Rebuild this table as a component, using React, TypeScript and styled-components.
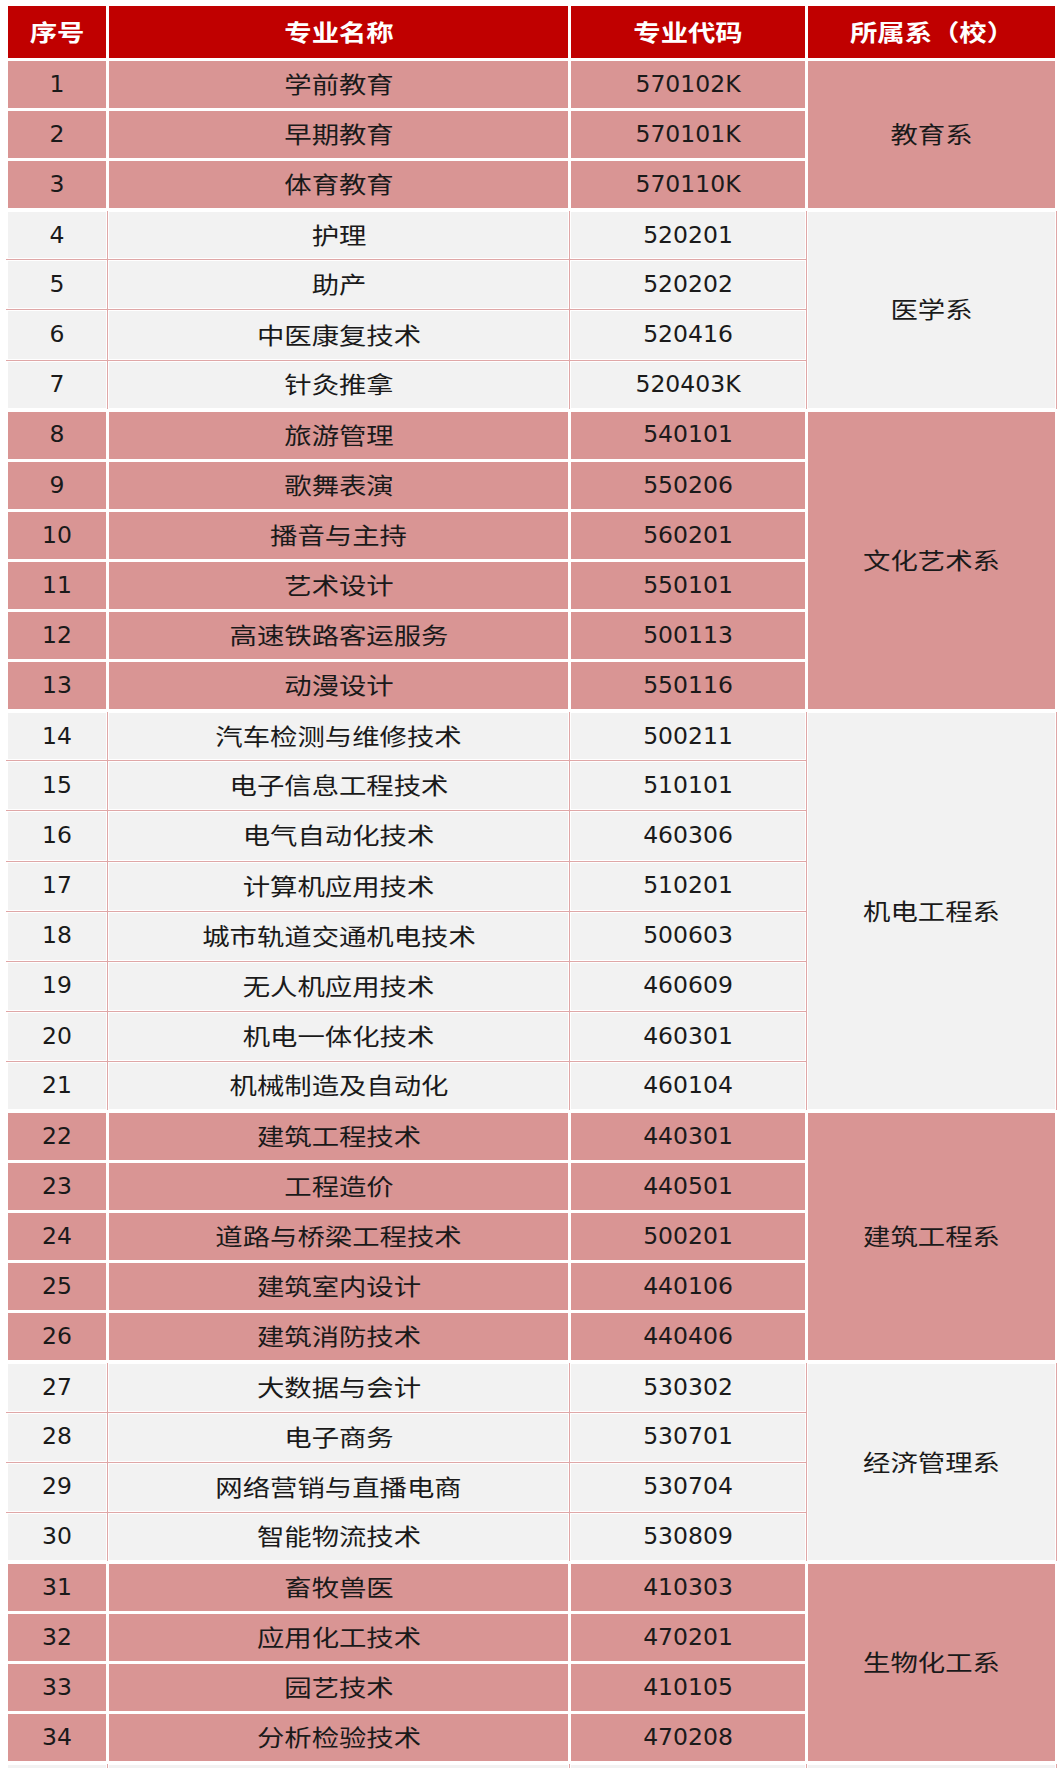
import React from 'react'
import styled, { createGlobalStyle, css } from 'styled-components'

type Tone = 'pink' | 'light'

const colors = {
  head: '#c00000',
  pink: '#d99594',
  light: '#f2f2f2',
  line: '#dfa7a7',
  text: '#1a1a1a',
}

const GlobalStyle = createGlobalStyle`
  html, body {
    margin: 0;
    background: #fff;
  }
`

const Page = styled.main`
  padding: 3px 4px 0 5px;
`

const Table = styled.table`
  width: 1050px;
  table-layout: fixed;
  border-collapse: collapse;
  color: ${colors.text};
`

const HeadRow = styled.tr`
  height: 55px;
`

const HeadCell = styled.th`
  background: ${colors.head};
  color: #fff;
  border: 3px solid #fff;
  padding: 0;
  text-align: center;
  vertical-align: middle;
`

const Row = styled.tr`
  height: 50.1px;
`

const toneStyle = {
  pink: css`
    background: ${colors.pink};
    border: 3px solid #fff;
  `,
  light: css`
    background: ${colors.light};
    border: 1px solid ${colors.line};
    box-shadow: inset 0 0 0 1px #fff;
  `,
}

const Cell = styled.td<{ $tone: Tone }>`
  ${p => toneStyle[p.$tone]};
  padding: 0;
  text-align: center;
  vertical-align: middle;

  &:first-child {
    border-left-color: #fff;
  }
`

const Cjk = styled.span<{ $bold?: boolean }>`
  display: inline-block;
  font-family: 'Noto Sans CJK SC', sans-serif;
  font-size: 23px;
  line-height: 1;
  font-weight: ${p => (p.$bold ? 700 : 400)};
  transform: scaleX(1.19);
`

const Num = styled.span`
  font-family: 'DejaVu Sans', Verdana, sans-serif;
  font-size: 23.5px;
  line-height: 1;
`

type Group = {
  dept: string
  tone: Tone
  items: [string, string][]
}

const groups: Group[] = [
  {
    dept: '教育系',
    tone: 'pink',
    items: [
      ['学前教育', '570102K'],
      ['早期教育', '570101K'],
      ['体育教育', '570110K'],
    ],
  },
  {
    dept: '医学系',
    tone: 'light',
    items: [
      ['护理', '520201'],
      ['助产', '520202'],
      ['中医康复技术', '520416'],
      ['针灸推拿', '520403K'],
    ],
  },
  {
    dept: '文化艺术系',
    tone: 'pink',
    items: [
      ['旅游管理', '540101'],
      ['歌舞表演', '550206'],
      ['播音与主持', '560201'],
      ['艺术设计', '550101'],
      ['高速铁路客运服务', '500113'],
      ['动漫设计', '550116'],
    ],
  },
  {
    dept: '机电工程系',
    tone: 'light',
    items: [
      ['汽车检测与维修技术', '500211'],
      ['电子信息工程技术', '510101'],
      ['电气自动化技术', '460306'],
      ['计算机应用技术', '510201'],
      ['城市轨道交通机电技术', '500603'],
      ['无人机应用技术', '460609'],
      ['机电一体化技术', '460301'],
      ['机械制造及自动化', '460104'],
    ],
  },
  {
    dept: '建筑工程系',
    tone: 'pink',
    items: [
      ['建筑工程技术', '440301'],
      ['工程造价', '440501'],
      ['道路与桥梁工程技术', '500201'],
      ['建筑室内设计', '440106'],
      ['建筑消防技术', '440406'],
    ],
  },
  {
    dept: '经济管理系',
    tone: 'light',
    items: [
      ['大数据与会计', '530302'],
      ['电子商务', '530701'],
      ['网络营销与直播电商', '530704'],
      ['智能物流技术', '530809'],
    ],
  },
  {
    dept: '生物化工系',
    tone: 'pink',
    items: [
      ['畜牧兽医', '410303'],
      ['应用化工技术', '470201'],
      ['园艺技术', '410105'],
      ['分析检验技术', '470208'],
    ],
  },
]

const headers = ['序号', '专业名称', '专业代码', '所属系（校）']

export default function App() {
  let n = 0

  return (
    <Page>
      <GlobalStyle />
      <Table>
        <colgroup>
          <col style={{ width: 101 }} />
          <col style={{ width: 462 }} />
          <col style={{ width: 237 }} />
          <col style={{ width: 250 }} />
        </colgroup>
        <thead>
          <HeadRow>
            {headers.map(h => (
              <HeadCell key={h}>
                <Cjk $bold>{h}</Cjk>
              </HeadCell>
            ))}
          </HeadRow>
        </thead>
        <tbody>
          {groups.map(g =>
            g.items.map(([name, code], i) => {
              n += 1
              return (
                <Row key={code + name}>
                  <Cell $tone={g.tone}>
                    <Num>{n}</Num>
                  </Cell>
                  <Cell $tone={g.tone}>
                    <Cjk>{name}</Cjk>
                  </Cell>
                  <Cell $tone={g.tone}>
                    <Num>{code}</Num>
                  </Cell>
                  {i === 0 && (
                    <Cell $tone={g.tone} rowSpan={g.items.length}>
                      <Cjk>{g.dept}</Cjk>
                    </Cell>
                  )}
                </Row>
              )
            }),
          )}
          <Row>
            <Cell $tone="light" />
            <Cell $tone="light" />
            <Cell $tone="light" />
            <Cell $tone="light" />
          </Row>
        </tbody>
      </Table>
    </Page>
  )
}
